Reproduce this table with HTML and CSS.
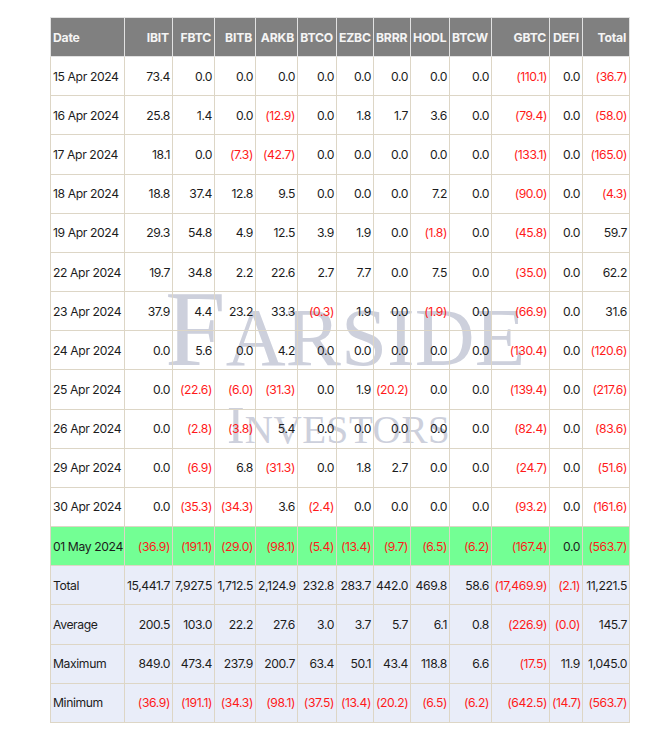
FILE: index.html
```html
<!DOCTYPE html>
<html>
<head>
<meta charset="utf-8">
<link rel="stylesheet" href="styles.css">
</head>
<body>
<div class="wrap">
  <div class="wm wm-top"><span class="big">F</span><span class="small">ARSIDE</span></div>
  <div class="wm wm-bottom"><span class="big">I</span><span class="small">NVESTORS</span></div>
  <table class="etf">
    <colgroup>
      <col style="width:74px"><col style="width:48px"><col style="width:42px"><col style="width:41px"><col style="width:42px"><col style="width:39px"><col style="width:37px"><col style="width:37px"><col style="width:39px"><col style="width:42px"><col style="width:58px"><col style="width:33px"><col style="width:47px">
    </colgroup>
    <thead>
      <tr><th class="first">Date</th><th>IBIT</th><th>FBTC</th><th>BITB</th><th>ARKB</th><th>BTCO</th><th>EZBC</th><th>BRRR</th><th>HODL</th><th>BTCW</th><th>GBTC</th><th>DEFI</th><th>Total</th></tr>
    </thead>
    <tbody>
      <tr><td>15 Apr 2024</td><td>73.4</td><td>0.0</td><td>0.0</td><td>0.0</td><td>0.0</td><td>0.0</td><td>0.0</td><td>0.0</td><td>0.0</td><td class="neg">(110.1)</td><td>0.0</td><td class="neg">(36.7)</td></tr>
      <tr><td>16 Apr 2024</td><td>25.8</td><td>1.4</td><td>0.0</td><td class="neg">(12.9)</td><td>0.0</td><td>1.8</td><td>1.7</td><td>3.6</td><td>0.0</td><td class="neg">(79.4)</td><td>0.0</td><td class="neg">(58.0)</td></tr>
      <tr><td>17 Apr 2024</td><td>18.1</td><td>0.0</td><td class="neg">(7.3)</td><td class="neg">(42.7)</td><td>0.0</td><td>0.0</td><td>0.0</td><td>0.0</td><td>0.0</td><td class="neg">(133.1)</td><td>0.0</td><td class="neg">(165.0)</td></tr>
      <tr><td>18 Apr 2024</td><td>18.8</td><td>37.4</td><td>12.8</td><td>9.5</td><td>0.0</td><td>0.0</td><td>0.0</td><td>7.2</td><td>0.0</td><td class="neg">(90.0)</td><td>0.0</td><td class="neg">(4.3)</td></tr>
      <tr><td>19 Apr 2024</td><td>29.3</td><td>54.8</td><td>4.9</td><td>12.5</td><td>3.9</td><td>1.9</td><td>0.0</td><td class="neg">(1.8)</td><td>0.0</td><td class="neg">(45.8)</td><td>0.0</td><td>59.7</td></tr>
      <tr><td>22 Apr 2024</td><td>19.7</td><td>34.8</td><td>2.2</td><td>22.6</td><td>2.7</td><td>7.7</td><td>0.0</td><td>7.5</td><td>0.0</td><td class="neg">(35.0)</td><td>0.0</td><td>62.2</td></tr>
      <tr><td>23 Apr 2024</td><td>37.9</td><td>4.4</td><td>23.2</td><td>33.3</td><td class="neg">(0.3)</td><td>1.9</td><td>0.0</td><td class="neg">(1.9)</td><td>0.0</td><td class="neg">(66.9)</td><td>0.0</td><td>31.6</td></tr>
      <tr><td>24 Apr 2024</td><td>0.0</td><td>5.6</td><td>0.0</td><td>4.2</td><td>0.0</td><td>0.0</td><td>0.0</td><td>0.0</td><td>0.0</td><td class="neg">(130.4)</td><td>0.0</td><td class="neg">(120.6)</td></tr>
      <tr><td>25 Apr 2024</td><td>0.0</td><td class="neg">(22.6)</td><td class="neg">(6.0)</td><td class="neg">(31.3)</td><td>0.0</td><td>1.9</td><td class="neg">(20.2)</td><td>0.0</td><td>0.0</td><td class="neg">(139.4)</td><td>0.0</td><td class="neg">(217.6)</td></tr>
      <tr><td>26 Apr 2024</td><td>0.0</td><td class="neg">(2.8)</td><td class="neg">(3.8)</td><td>5.4</td><td>0.0</td><td>0.0</td><td>0.0</td><td>0.0</td><td>0.0</td><td class="neg">(82.4)</td><td>0.0</td><td class="neg">(83.6)</td></tr>
      <tr><td>29 Apr 2024</td><td>0.0</td><td class="neg">(6.9)</td><td>6.8</td><td class="neg">(31.3)</td><td>0.0</td><td>1.8</td><td>2.7</td><td>0.0</td><td>0.0</td><td class="neg">(24.7)</td><td>0.0</td><td class="neg">(51.6)</td></tr>
      <tr><td>30 Apr 2024</td><td>0.0</td><td class="neg">(35.3)</td><td class="neg">(34.3)</td><td>3.6</td><td class="neg">(2.4)</td><td>0.0</td><td>0.0</td><td>0.0</td><td>0.0</td><td class="neg">(93.2)</td><td>0.0</td><td class="neg">(161.6)</td></tr>
      <tr class="today"><td>01 May 2024</td><td class="neg">(36.9)</td><td class="neg">(191.1)</td><td class="neg">(29.0)</td><td class="neg">(98.1)</td><td class="neg">(5.4)</td><td class="neg">(13.4)</td><td class="neg">(9.7)</td><td class="neg">(6.5)</td><td class="neg">(6.2)</td><td class="neg">(167.4)</td><td>0.0</td><td class="neg">(563.7)</td></tr>
      <tr class="stat"><td>Total</td><td>15,441.7</td><td>7,927.5</td><td>1,712.5</td><td>2,124.9</td><td>232.8</td><td>283.7</td><td>442.0</td><td>469.8</td><td>58.6</td><td class="neg">(17,469.9)</td><td class="neg">(2.1)</td><td>11,221.5</td></tr>
      <tr class="stat"><td>Average</td><td>200.5</td><td>103.0</td><td>22.2</td><td>27.6</td><td>3.0</td><td>3.7</td><td>5.7</td><td>6.1</td><td>0.8</td><td class="neg">(226.9)</td><td class="neg">(0.0)</td><td>145.7</td></tr>
      <tr class="stat"><td>Maximum</td><td>849.0</td><td>473.4</td><td>237.9</td><td>200.7</td><td>63.4</td><td>50.1</td><td>43.4</td><td>118.8</td><td>6.6</td><td class="neg">(17.5)</td><td>11.9</td><td>1,045.0</td></tr>
      <tr class="stat"><td>Minimum</td><td class="neg">(36.9)</td><td class="neg">(191.1)</td><td class="neg">(34.3)</td><td class="neg">(98.1)</td><td class="neg">(37.5)</td><td class="neg">(13.4)</td><td class="neg">(20.2)</td><td class="neg">(6.5)</td><td class="neg">(6.2)</td><td class="neg">(642.5)</td><td class="neg">(14.7)</td><td class="neg">(563.7)</td></tr>
    </tbody>
  </table>
</div>
</body>
</html>
```
FILE: styles.css
```css
html, body {
  margin: 0;
  padding: 0;
  background: #ffffff;
}
body {
  padding: 17px 0 0 50px;
  font-family: Inter, "Liberation Sans", sans-serif;
  font-size: 12.2px;
  letter-spacing: -0.4px;
  color: #1c1c1c;
}
.wrap {
  position: relative;
  width: 579px;
}
.wm {
  position: absolute;
  font-family: "Liberation Serif", "Times New Roman", serif;
  color: #cdd0dc;
  line-height: 1;
  letter-spacing: 0;
  white-space: nowrap;
  pointer-events: none;
  z-index: 0;
}
.wm-top {
  left: 115px;
  top: 257px;
}
.wm-top .big { font-size: 109px; }
.wm-top .small { font-size: 83px; }
.wm-bottom {
  left: 177px;
  top: 382px;
}
.wm-bottom .big { font-size: 53px; }
.wm-bottom .small { font-size: 39px; letter-spacing: 0.6px; }
.etf {
  position: relative;
  z-index: 1;
  border-collapse: collapse;
  table-layout: fixed;
  width: 579px;
}
.etf th, .etf td {
  border: 1px solid #ddd6c6;
  height: 38.17px;
  padding: 0 2px 0 2px;
  text-align: right;
  white-space: nowrap;
  vertical-align: middle;
  overflow: visible;
}
.etf th {
  background: #808080;
  color: #f4f4f4;
  font-weight: 700;
  border-color: #e2e2e2;
  padding-right: 3px;
  letter-spacing: -0.2px;
}
.etf th.first {
  text-align: left;
}
.etf td:first-child {
  text-align: left;
}
.etf .neg {
  color: #ff1a1a;
}
.etf tr.today td {
  background: #73ff94;
}
.etf tr.stat td {
  background: #e9edf9;
}
```
